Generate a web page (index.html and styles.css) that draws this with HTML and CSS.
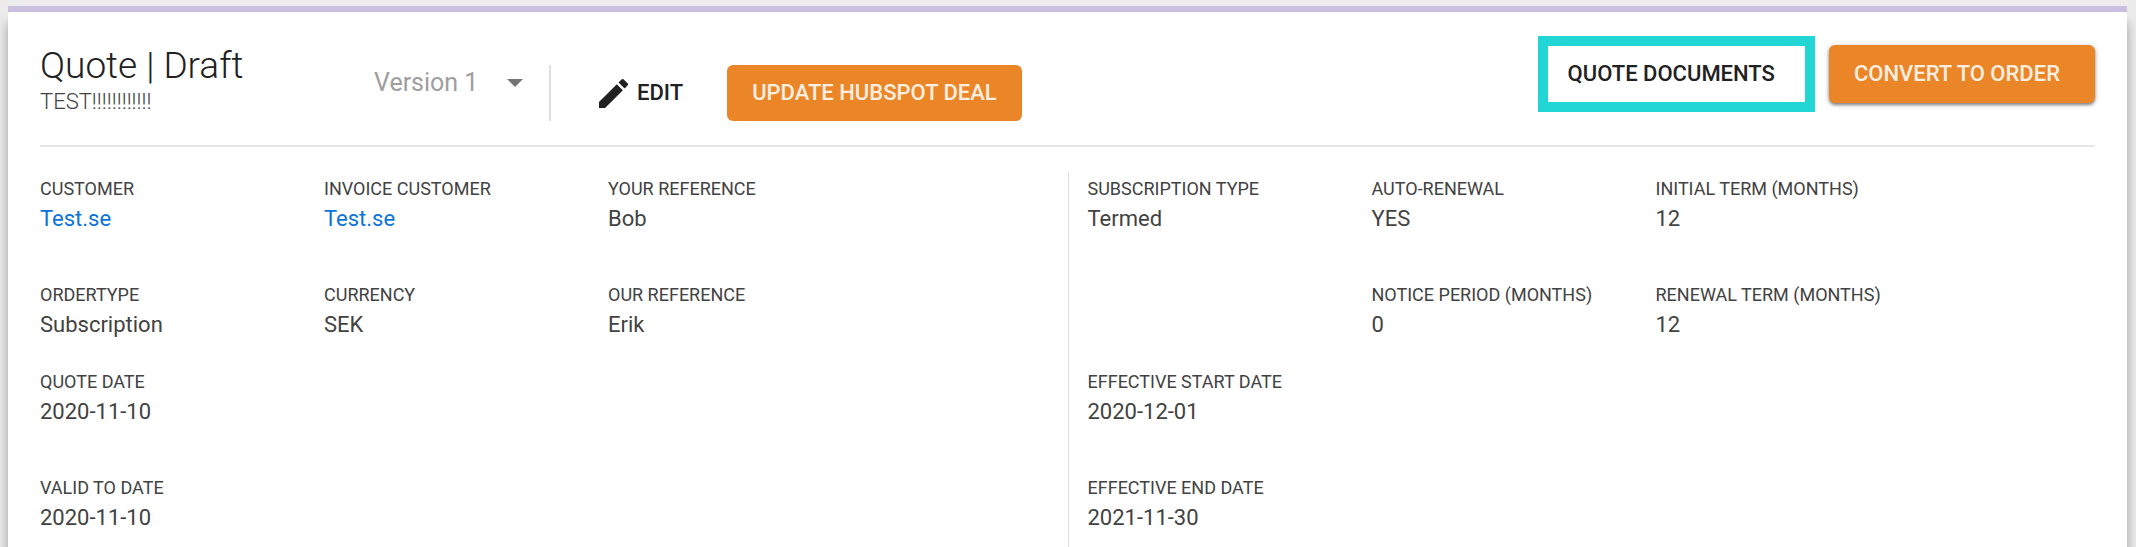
FILE: index.html
```html
<!DOCTYPE html>
<html lang="en">
<head>
<meta charset="utf-8">
<title>Quote | Draft</title>
<link rel="stylesheet" href="styles.css">
</head>
<body>
<div class="strip"></div>
<main class="card">
  <header class="header">
    <div class="heading">
      <h1 class="title">Quote | Draft</h1>
      <p class="subtitle">TEST!!!!!!!!!!!!</p>
    </div>
    <div class="tools">
      <div class="version">
        <select class="version-select" aria-label="Version">
          <option>Version 1</option>
        </select>
        <svg class="caret" viewBox="0 0 16 8" aria-hidden="true"><path d="M0 0h16L8 8z"/></svg>
      </div>
      <div class="actions">
        <button class="button edit" type="button">
          <svg class="pencil" viewBox="3 3 18 18" aria-hidden="true"><path d="M3 17.25V21h3.75L17.81 9.94l-3.75-3.75L3 17.25zM20.71 7.04c.39-.39.39-1.02 0-1.41l-2.34-2.34c-.39-.39-1.02-.39-1.41 0l-1.83 1.83 3.75 3.75 1.83-1.83z"/></svg>
          <span>EDIT</span>
        </button>
        <button class="button primary" type="button">UPDATE HUBSPOT DEAL</button>
      </div>
    </div>
    <div class="main-actions">
      <button class="button documents" type="button">QUOTE DOCUMENTS</button>
      <button class="button primary raised" type="button">CONVERT TO ORDER</button>
    </div>
  </header>
  <div class="panels">
    <section class="panel">
      <dl class="fields">
        <div class="field"><dt>CUSTOMER</dt><dd><a href="#customer">Test.se</a></dd></div>
        <div class="field"><dt>INVOICE CUSTOMER</dt><dd><a href="#invoice-customer">Test.se</a></dd></div>
        <div class="field"><dt>YOUR REFERENCE</dt><dd>Bob</dd></div>
        <div class="field"><dt>ORDERTYPE</dt><dd>Subscription</dd></div>
        <div class="field"><dt>CURRENCY</dt><dd>SEK</dd></div>
        <div class="field"><dt>OUR REFERENCE</dt><dd>Erik</dd></div>
      </dl>
      <dl class="dates">
        <div class="field"><dt>QUOTE DATE</dt><dd>2020-11-10</dd></div>
        <div class="field"><dt>VALID TO DATE</dt><dd>2020-11-10</dd></div>
      </dl>
    </section>
    <section class="panel">
      <dl class="fields">
        <div class="field"><dt>SUBSCRIPTION TYPE</dt><dd>Termed</dd></div>
        <div class="field"><dt>AUTO-RENEWAL</dt><dd>YES</dd></div>
        <div class="field"><dt>INITIAL TERM (MONTHS)</dt><dd>12</dd></div>
        <div class="field second"><dt>NOTICE PERIOD (MONTHS)</dt><dd>0</dd></div>
        <div class="field"><dt>RENEWAL TERM (MONTHS)</dt><dd>12</dd></div>
      </dl>
      <dl class="dates">
        <div class="field"><dt>EFFECTIVE START DATE</dt><dd>2020-12-01</dd></div>
        <div class="field"><dt>EFFECTIVE END DATE</dt><dd>2021-11-30</dd></div>
      </dl>
    </section>
  </div>
</main>
</body>
</html>
```
FILE: styles.css
```css
* {
  box-sizing: border-box;
}

html {
  height: 100%;
}

body {
  display: flex;
  flex-direction: column;
  min-height: 100%;
  margin: 0;
  padding: 6px 9px 0 8px;
  overflow-x: hidden;
  background: #ececec;
  color: #424242;
  font-family: Roboto, sans-serif;
}

h1, p, dl, dd {
  margin: 0;
}

.strip {
  height: 6px;
  background: #cbbfe2;
}

.card {
  display: flex;
  flex: 1;
  flex-direction: column;
  padding: 0 32px;
  border-radius: 3px 3px 0 0;
  background: #fff;
  box-shadow: 0 10px 12px rgba(0, 0, 0, 0.35);
}

.header {
  display: flex;
  align-items: flex-start;
  padding: 24px 0;
  border-bottom: 2px solid #e6e6e6;
}

.heading {
  flex: 0 0 334px;
  padding-top: 6px;
}

.title {
  color: #212121;
  font-size: 37px;
  font-weight: 300;
  line-height: 48px;
}

.subtitle {
  font-size: 22px;
  font-weight: 300;
  line-height: 24px;
}

.tools {
  display: flex;
  align-items: flex-start;
  padding-top: 29px;
}

.version {
  display: flex;
  align-items: center;
  width: 150px;
  height: 36px;
}

.version-select {
  flex: 1;
  min-width: 0;
  padding: 0;
  border: 0;
  appearance: none;
  background: none;
  color: #9e9e9e;
  font: 400 25px/32px Roboto, sans-serif;
}

.caret {
  width: 16px;
  height: 8px;
  margin-right: 1px;
  fill: #757575;
}

.actions {
  display: flex;
  gap: 24px;
  margin-left: 25px;
  border-left: 2px solid #e0e0e0;
}

.button {
  padding: 0 25px;
  border: 0;
  border-radius: 6px;
  background: none;
  color: #212121;
  font: 500 22px/56px Roboto, sans-serif;
  white-space: nowrap;
}

.edit {
  display: flex;
  align-items: center;
  gap: 9px;
  margin-left: 28px;
  padding: 0 20px;
}

.pencil {
  width: 29px;
  height: 29px;
  fill: #212121;
}

.primary {
  background: #ea8627;
  color: #fdeee0;
}

.main-actions {
  display: flex;
  align-items: center;
  gap: 14px;
  margin-left: auto;
}

.documents {
  padding: 0 30px 0 20px;
  border: 10px solid #22d6d6;
  border-radius: 0;
}

.raised {
  padding: 0 35px 0 25px;
  line-height: 58px;
  box-shadow: 0 2px 3px rgba(0, 0, 0, 0.4), 0 1px 6px rgba(0, 0, 0, 0.2);
}

.panels {
  display: grid;
  flex: 1;
  grid-template-columns: 1fr 1fr;
  padding-top: 25px;
}

.panel {
  padding-top: 4px;
}

.panel + .panel {
  padding-left: 19px;
  border-left: 1px solid #dcdcdc;
}

.fields {
  display: grid;
  grid-template-columns: repeat(3, minmax(0, 284px));
  row-gap: 46px;
}

.second {
  grid-column: 2;
}

.dates {
  display: flex;
  flex-direction: column;
  gap: 46px;
  margin-top: 27px;
}

.field dt {
  font-size: 18px;
  line-height: 26px;
}

.field dd {
  font-size: 22px;
  line-height: 34px;
}

.field a {
  color: #0b74d8;
  text-decoration: none;
}
```
